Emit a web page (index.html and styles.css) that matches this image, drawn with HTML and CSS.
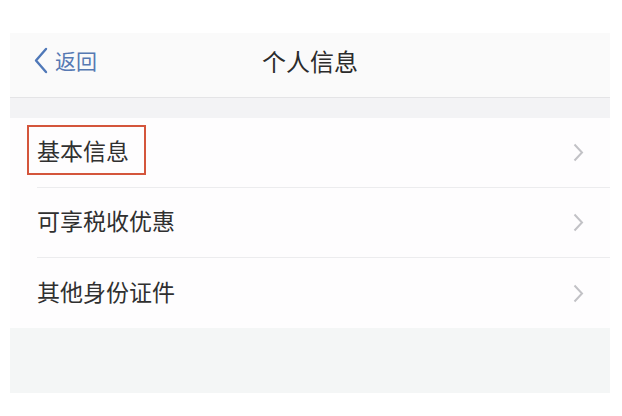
FILE: index.html
```html
<!DOCTYPE html>
<html>
  <head>
    <meta charset="utf-8">
    <title>个人信息</title>
    <link rel="stylesheet" href="styles.css">
</head>
<body>
  <div class="screen">
    <div class="navbar">
      <a class="back" href="#">
        <svg class="back-icon" width="14" height="27" viewBox="0 0 14 27">
          <path d="M12 2 L2 13.5 L12 25" fill="none" stroke="#4f78b8" stroke-width="2.4" stroke-linecap="round" stroke-linejoin="round"/>
        </svg>
        <span>返回</span>
      </a>
      <div class="title">个人信息</div>
    </div>

    <ul class="menu">
      <li class="item">
        <span class="label marked">基本信息</span>
        <svg class="arrow" width="11" height="19" viewBox="0 0 11 19"><path d="M1.5 1.5 L9 9.5 L1.5 17.5" fill="none" stroke="#c2c2c6" stroke-width="2"/></svg>
      </li>
      <li class="item">
        <span class="label">可享税收优惠</span>
        <svg class="arrow" width="11" height="19" viewBox="0 0 11 19"><path d="M1.5 1.5 L9 9.5 L1.5 17.5" fill="none" stroke="#c2c2c6" stroke-width="2"/></svg>
      </li>
      <li class="item">
        <span class="label">其他身份证件</span>
        <svg class="arrow" width="11" height="19" viewBox="0 0 11 19"><path d="M1.5 1.5 L9 9.5 L1.5 17.5" fill="none" stroke="#c2c2c6" stroke-width="2"/></svg>
      </li>
    </ul>

    <div class="footer-space"></div>
  </div>
</body>
</html>
```

FILE: styles.css
```css
body {
  margin: 0;
  background: #fff;
  font-family: "Noto Sans CJK SC", "Noto Sans", sans-serif;
}

.screen {
  width: 600px;
  margin: 33px 0 0 10px;
  background: #f3f3f5;
}

.navbar {
  height: 65px;
  box-sizing: border-box;
  padding-bottom: 10px;
  background: #fafafa;
  border-bottom: 1px solid #e4e4e6;
  display: flex;
  align-items: center;
  justify-content: center;
  position: relative;
}

.back {
  position: absolute;
  left: 24px;
  top: 12px;
  display: flex;
  align-items: center;
  gap: 7px;
  color: #5679b3;
  text-decoration: none;
  font-size: 21px;
}

.title {
  font-size: 24px;
  color: #2b2b2b;
}

.menu {
  list-style: none;
  padding: 0;
  margin: 20px 0 0 0;
  background: #fefdfe;
}

.item {
  height: 70px;
  box-sizing: border-box;
  margin-left: 27px;
  padding-right: 26px;
  display: flex;
  align-items: center;
  justify-content: space-between;
  border-bottom: 1px solid #ececee;
}

.item:last-child {
  border-bottom: none;
}

.label {
  font-size: 23px;
  line-height: 30px;
  color: #303030;
  padding: 8px 15px 8px 8px;
  margin: 0 0 5px -10px;
  border: 2px solid transparent;
}

.label.marked {
  border-color: #d4553c;
}

.footer-space {
  height: 65px;
  background: #f4f6f6;
}
```
